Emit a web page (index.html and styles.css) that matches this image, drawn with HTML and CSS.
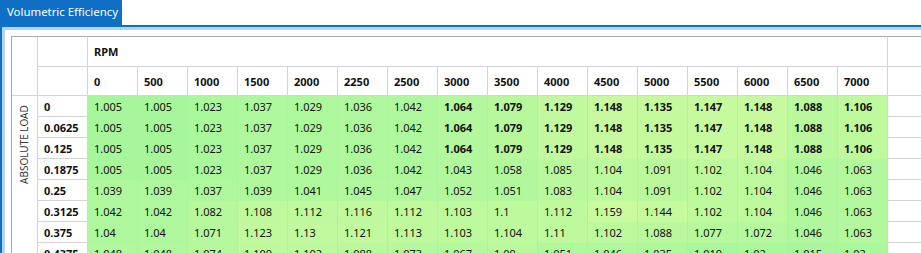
FILE: index.html
```html
<!DOCTYPE html>
<html lang="en">
<head>
    <meta charset="UTF-8">
    <title>Volumetric Efficiency</title>
    <link rel="stylesheet" href="styles.css">
</head>
<body>

    <div class="tabs">
        <div class="tab">Volumetric Efficiency</div>
    </div>

    <div class="panel">
        <div class="panel-inner">
            <table class="map-table" id="veTable">
                <colgroup id="cols">
                    <col class="col-axis">
                    <col class="col-rowhead">
                </colgroup>
                <thead>
                    <tr class="head-row-1">
                        <th class="axis-cell" rowspan="2"></th>
                        <th class="row-head"></th>
                        <th class="axis-title" colspan="16">RPM</th>
                        <th class="spare"></th>
                    </tr>
                    <tr class="head-row-2" id="rpmRow">
                        <th class="row-head"></th>
                    </tr>
                </thead>
                <tbody id="veBody"></tbody>
            </table>
        </div>
    </div>

    <script>
        const rpm = [0, 500, 1000, 1500, 2000, 2250, 2500, 3000, 3500, 4000, 4500, 5000, 5500, 6000, 6500, 7000];

        const rows = [
            ['0',      [1.005, 1.005, 1.023, 1.037, 1.029, 1.036, 1.042, 1.064, 1.079, 1.129, 1.148, 1.135, 1.147, 1.148, 1.088, 1.106]],
            ['0.0625', [1.005, 1.005, 1.023, 1.037, 1.029, 1.036, 1.042, 1.064, 1.079, 1.129, 1.148, 1.135, 1.147, 1.148, 1.088, 1.106]],
            ['0.125',  [1.005, 1.005, 1.023, 1.037, 1.029, 1.036, 1.042, 1.064, 1.079, 1.129, 1.148, 1.135, 1.147, 1.148, 1.088, 1.106]],
            ['0.1875', [1.005, 1.005, 1.023, 1.037, 1.029, 1.036, 1.042, 1.043, 1.058, 1.085, 1.104, 1.091, 1.102, 1.104, 1.046, 1.063]],
            ['0.25',   [1.039, 1.039, 1.037, 1.039, 1.041, 1.045, 1.047, 1.052, 1.051, 1.083, 1.104, 1.091, 1.102, 1.104, 1.046, 1.063]],
            ['0.3125', [1.042, 1.042, 1.082, 1.108, 1.112, 1.116, 1.112, 1.103, 1.1, 1.112, 1.159, 1.144, 1.102, 1.104, 1.046, 1.063]],
            ['0.375',  [1.04, 1.04, 1.071, 1.123, 1.13, 1.121, 1.113, 1.103, 1.104, 1.11, 1.102, 1.088, 1.077, 1.072, 1.046, 1.063]],
            ['0.4375', [1.048, 1.048, 1.074, 1.109, 1.102, 1.088, 1.073, 1.067, 1.09, 1.051, 1.046, 1.035, 1.019, 1.02, 1.015, 1.02]]
        ];

        // cells changed in the current session are shown bold
        function isEdited(r, c) {
            return r < 3 && c >= 7;
        }

        // green for low values, towards yellow for high ones
        function cellColor(v) {
            let t = (v - 1.0) / 0.16;
            t = Math.max(0, Math.min(1, t));
            const lo = [166, 246, 156];
            const hi = [202, 250, 158];
            const c = lo.map((x, i) => Math.round(x + (hi[i] - x) * t));
            return 'rgb(' + c.join(',') + ')';
        }

        // column widths
        const cols = document.getElementById('cols');
        rpm.forEach(() => {
            const col = document.createElement('col');
            col.className = 'col-data';
            cols.appendChild(col);
        });
        const spareCol = document.createElement('col');
        spareCol.className = 'col-spare';
        cols.appendChild(spareCol);

        // RPM header row
        const rpmRow = document.getElementById('rpmRow');
        rpm.forEach(r => {
            const th = document.createElement('th');
            th.className = 'col-head';
            th.innerText = r;
            rpmRow.appendChild(th);
        });
        const spare = document.createElement('th');
        spare.className = 'spare';
        rpmRow.appendChild(spare);

        // data rows
        const body = document.getElementById('veBody');
        rows.forEach((row, r) => {
            const tr = document.createElement('tr');

            if (r === 0) {
                const axis = document.createElement('td');
                axis.className = 'axis-cell load-axis';
                axis.rowSpan = rows.length;
                axis.innerHTML = '<span class="axis-label">ABSOLUTE LOAD</span>';
                tr.appendChild(axis);
            }

            const head = document.createElement('th');
            head.className = 'row-head';
            head.innerText = row[0];
            tr.appendChild(head);

            row[1].forEach((v, c) => {
                const td = document.createElement('td');
                td.className = isEdited(r, c) ? 'cell edited' : 'cell';
                td.style.backgroundColor = cellColor(v);
                td.innerText = v;
                tr.appendChild(td);
            });

            const end = document.createElement('td');
            end.className = 'spare';
            tr.appendChild(end);

            body.appendChild(tr);
        });
    </script>
</body>
</html>
```

FILE: styles.css
```css
html, body {
    margin: 0;
    padding: 0;
    background-color: white;
    overflow: hidden;
}
body {
    font-family: "Noto Sans", "Open Sans", sans-serif;
    font-size: 11px;
    color: #111;
    width: 921px;
    height: 253px;
}
.tabs {
    display: flex;
    height: 25px;
}
.tab {
    background-color: #0e6fc4;
    color: white;
    font-size: 11.4px;
    line-height: 24px;
    height: 25px;
    width: 122px;
    box-sizing: border-box;
    padding-left: 7px;
    white-space: nowrap;
}
.panel {
    border-top: 2px solid #0e6fc4;
    border-left: 2px solid #0e6fc4;
    width: 1000px;
    height: 400px;
}
.panel-inner {
    border-top: 3px solid #b4d4ee;
    border-left: 3px solid #b4d4ee;
    padding: 6px 0 0 6px;
    height: 100%;
}
.map-table {
    border-collapse: separate;
    border-spacing: 0;
    table-layout: fixed;
    border-top: 1px solid #a8a8a8;
    border-left: 1px solid #a8a8a8;
    width: 976px;
}
.col-axis {
    width: 26px;
}
.col-rowhead {
    width: 50px;
}
.col-data {
    width: 50px;
}
.col-spare {
    width: 100px;
}
.map-table th, .map-table td {
    box-sizing: border-box;
    border-right: 1px solid #d4d4d8;
    border-bottom: 1px solid #d4d4d8;
    padding: 0 0 0 6px;
    text-align: left;
    white-space: nowrap;
    overflow: hidden;
}
.map-table th {
    font-weight: bold;
}
.axis-cell {
    padding: 0;
}
.head-row-1 th {
    height: 30px;
}
.head-row-2 th {
    height: 29px;
}
.axis-title {
    padding-left: 8px;
}
.map-table tbody th, .map-table tbody td {
    height: 21px;
}
.map-table td.cell {
    border-bottom: none;
    font-weight: normal;
}
.map-table td.edited {
    font-weight: bold;
}
.map-table td.load-axis {
    vertical-align: top;
    padding: 6px 0 0 0;
}
.axis-label {
    display: block;
    writing-mode: vertical-rl;
    transform: rotate(180deg);
    font-size: 10px;
    color: #333;
    line-height: 24px;
    height: 82px;
    text-align: left;
}
```
